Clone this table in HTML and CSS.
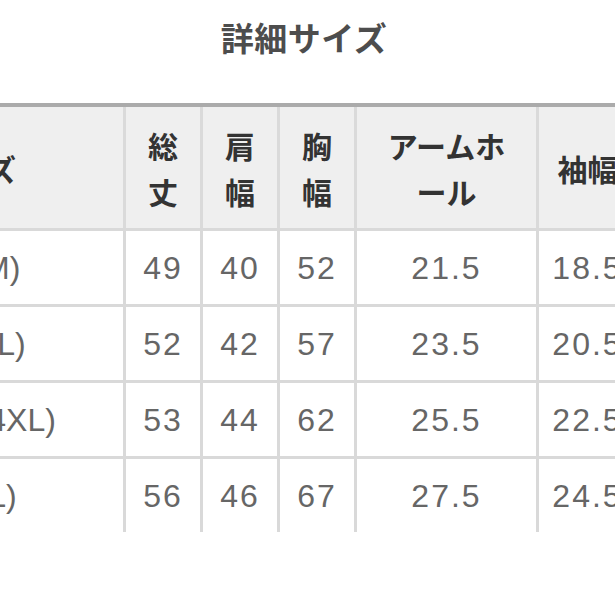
FILE: index.html
```html
<!DOCTYPE html>
<html lang="ja">
<head>
<meta charset="utf-8">
<title>詳細サイズ</title>
<link rel="stylesheet" href="styles.css">
</head>
<body>
<h1 class="title">詳細サイズ</h1>
<table class="sheet">
  <colgroup>
    <col class="w-size">
    <col class="w-narrow">
    <col class="w-narrow">
    <col class="w-narrow">
    <col class="w-arm">
    <col class="w-sleeve">
  </colgroup>
  <thead>
    <tr>
      <th class="size">サイズ</th>
      <th>総丈</th>
      <th>肩幅</th>
      <th>胸幅</th>
      <th class="arm">アームホール</th>
      <th class="sleeve">袖幅</th>
    </tr>
  </thead>
  <tbody>
    <tr><td class="size">S(M)</td><td>49</td><td>40</td><td>52</td><td>21.5</td><td>18.5</td></tr>
    <tr><td class="size">LL(L)</td><td>52</td><td>42</td><td>57</td><td>23.5</td><td>20.5</td></tr>
    <tr><td class="size">M(4XL)</td><td>53</td><td>44</td><td>62</td><td>25.5</td><td>22.5</td></tr>
    <tr><td class="size">M(L)</td><td>56</td><td>46</td><td>67</td><td>27.5</td><td>24.5</td></tr>
  </tbody>
</table>
</body>
</html>
```

FILE: styles.css
```css
html, body {
  margin: 0;
  padding: 0;
  background: #ffffff;
}

body {
  overflow: hidden;
  font-family: "Liberation Sans", "Noto Sans CJK JP", sans-serif;
}

.title {
  margin: 0;
  padding: 17px 7px 0 0;
  height: 40px;
  font: 700 33px/40px "Noto Sans CJK JP", sans-serif;
  letter-spacing: 0.5px;
  color: #4d4d4d;
  text-align: center;
}

.sheet {
  margin-top: 46px;
  margin-left: -80px;
  border-collapse: separate;
  border-spacing: 0;
  table-layout: fixed;
  width: 716px;
  border-top: 4px solid #ababab;
}

.w-size { width: 203px; }
.w-narrow { width: 77px; }
.w-arm { width: 182px; }
.w-sleeve { width: 100px; }

.sheet th {
  box-sizing: border-box;
  height: 121px;
  padding: 0 20px;
  background: #efefef;
  border-left: 3px solid #dadada;
  font: 700 30px/46px "Noto Sans CJK JP", sans-serif;
  color: #333333;
  text-align: center;
  vertical-align: middle;
}

.sheet th.size {
  text-align: left;
  padding-left: 7px;
  border-left: none;
}

.sheet th.arm {
  line-break: loose;
}

.sheet th.sleeve {
  padding: 0 6px;
  white-space: nowrap;
}

.sheet td {
  box-sizing: border-box;
  height: 76px;
  padding: 0;
  border-top: 3px solid #d9d9d9;
  border-left: 3px solid #d9d9d9;
  font: 400 32px/40px "Liberation Sans", "Noto Sans CJK JP", sans-serif;
  letter-spacing: 2px;
  color: #666666;
  text-align: center;
  vertical-align: middle;
}

.sheet td.size {
  text-align: left;
  padding-left: 31px;
  letter-spacing: 0;
  border-left: none;
}
```
